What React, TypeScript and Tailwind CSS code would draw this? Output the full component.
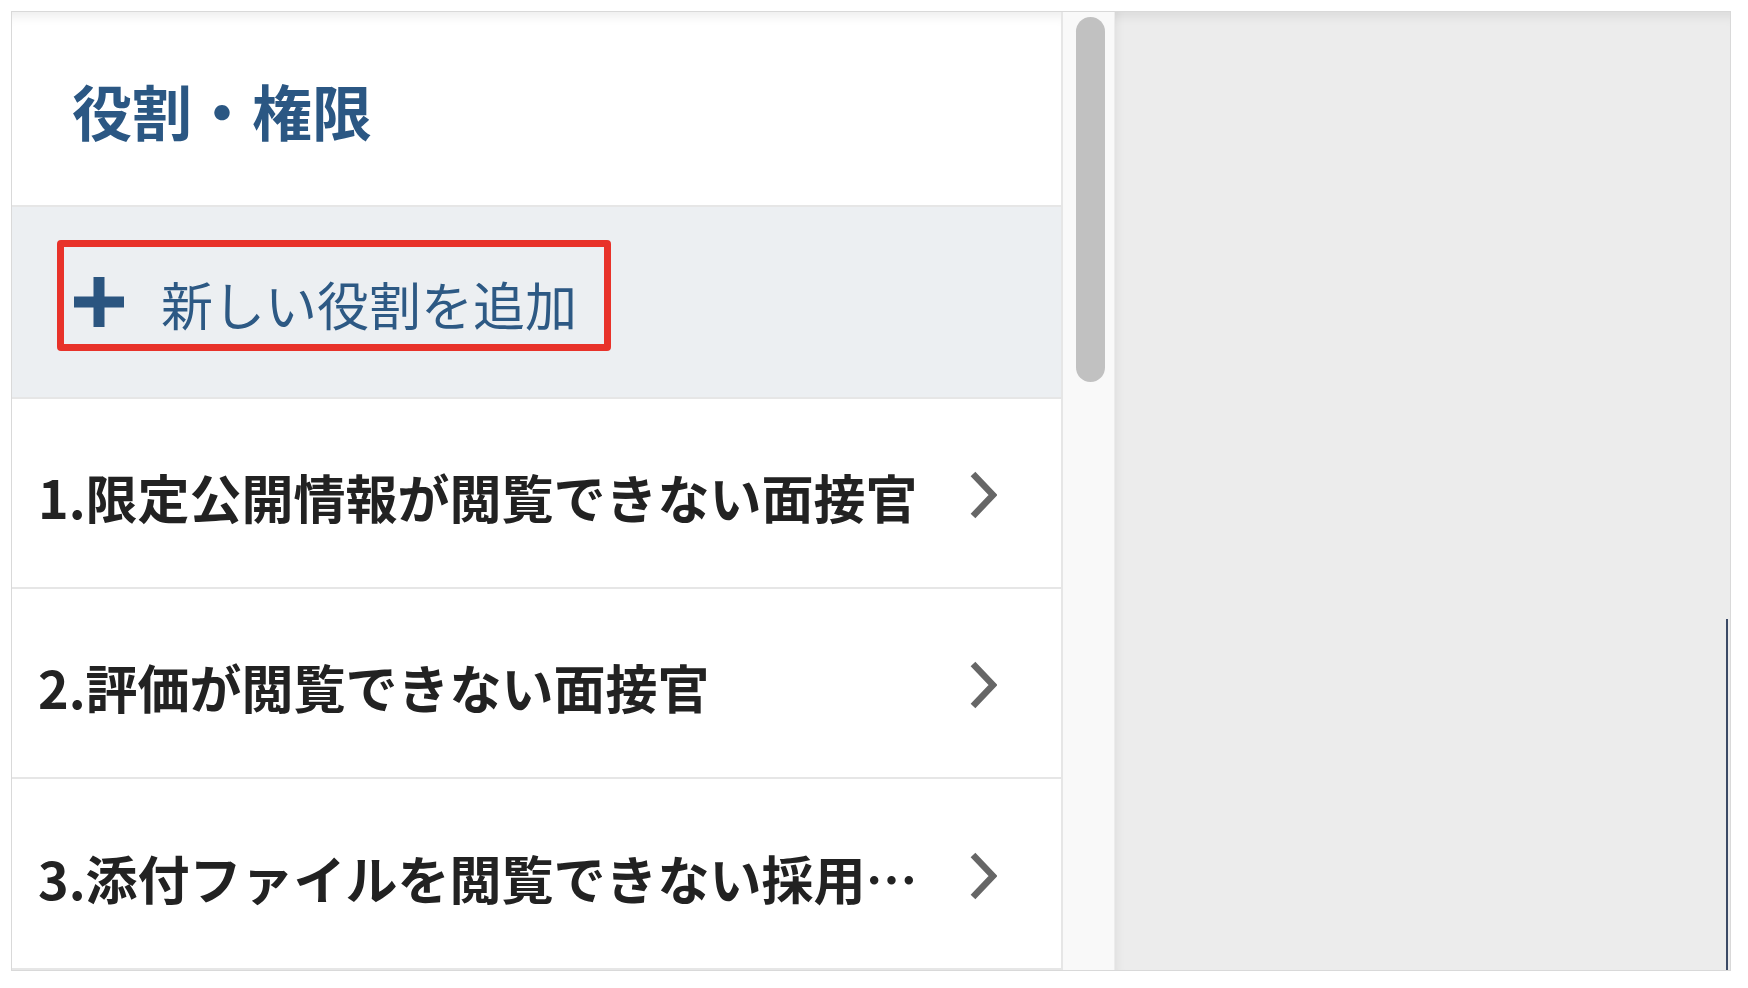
import { ReactNode } from "react";

const font = { fontFamily: '"Noto Sans CJK JP", "Noto Sans", sans-serif' };

const roles = [
  "1.限定公開情報が閲覧できない面接官",
  "2.評価が閲覧できない面接官",
  "3.添付ファイルを閲覧できない採用担当者",
];

function Chevron() {
  return (
    <svg width="28" height="48" viewBox="0 0 28 48" fill="none" className="shrink-0 mt-[4px]">
      <polyline points="4,3 24,24 4,45" stroke="#666666" strokeWidth="6.5" strokeLinecap="butt" strokeLinejoin="miter" />
    </svg>
  );
}

function Plus() {
  return (
    <svg width="50" height="50" viewBox="0 0 50 50" className="shrink-0">
      <rect x="19.5" y="0" width="11" height="50" fill="#2b5580" />
      <rect x="0" y="19.5" width="50" height="11" fill="#2b5580" />
    </svg>
  );
}

function RoleRow({ children, last }: { children: ReactNode; last?: boolean }) {
  return (
    <div
      className={
        "flex items-center justify-between pl-[26px] pr-[64px] bg-white border-b-2 border-[#e6e6e6] " +
        (last ? "h-[191px]" : "h-[190px]")
      }
    >
      <span className="block w-[890px] truncate text-[52px] font-bold leading-[1.5] text-[#222222] pt-[8px]">
        {children}
      </span>
      <Chevron />
    </div>
  );
}

export default function App() {
  return (
    <div className="w-[1748px] h-[988px] bg-white pt-[11px] pl-[11px]" style={font}>
      <div className="relative flex w-[1720px] h-[960px] border border-[#d9d9d9] overflow-hidden">
        {/* left list */}
        <div className="flex flex-col w-[1051px] border-r-2 border-[#e6e6e6] bg-white">
          <div className="flex items-center h-[195px] pl-[60px] pt-[2px] border-b-2 border-[#e6e6e6] bg-white shadow-[inset_0_14px_12px_-10px_rgba(0,0,0,0.08)]">
            <h1 className="text-[60px] font-bold leading-none text-[#2b5783]">役割・権限</h1>
          </div>
          <div className="h-[192px] pt-[33px] pl-[45px] bg-[#eceff2] border-b-2 border-[#e6e6e6]">
            <div className="flex items-center w-[554px] h-[111px] border-[7px] border-[#e8322a] rounded-[4px] pl-[10px] pt-[12px]">
              <Plus />
              <span className="ml-[37px] mt-[4px] text-[52px] leading-none text-[#2d5984]">新しい役割を追加</span>
            </div>
          </div>
          {roles.map((r, i) => (
            <RoleRow key={i} last={i === roles.length - 1}>
              {r}
            </RoleRow>
          ))}
        </div>

        {/* scrollbar */}
        <div className="w-[52px] bg-[#f9f9f9] border-r border-[#ececec] pt-[5px] pl-[13px]">
          <div className="w-[29px] h-[365px] rounded-full bg-[#c1c1c1]" />
        </div>

        {/* right area */}
        <div className="relative flex-1 bg-[#ececec] shadow-[inset_10px_0_10px_-8px_rgba(0,0,0,0.06),inset_0_14px_12px_-10px_rgba(0,0,0,0.08)]">
          <div className="absolute right-[2px] top-[607px] bottom-0 w-[2px] bg-[#3b4a66]" />
        </div>
      </div>
    </div>
  );
}
